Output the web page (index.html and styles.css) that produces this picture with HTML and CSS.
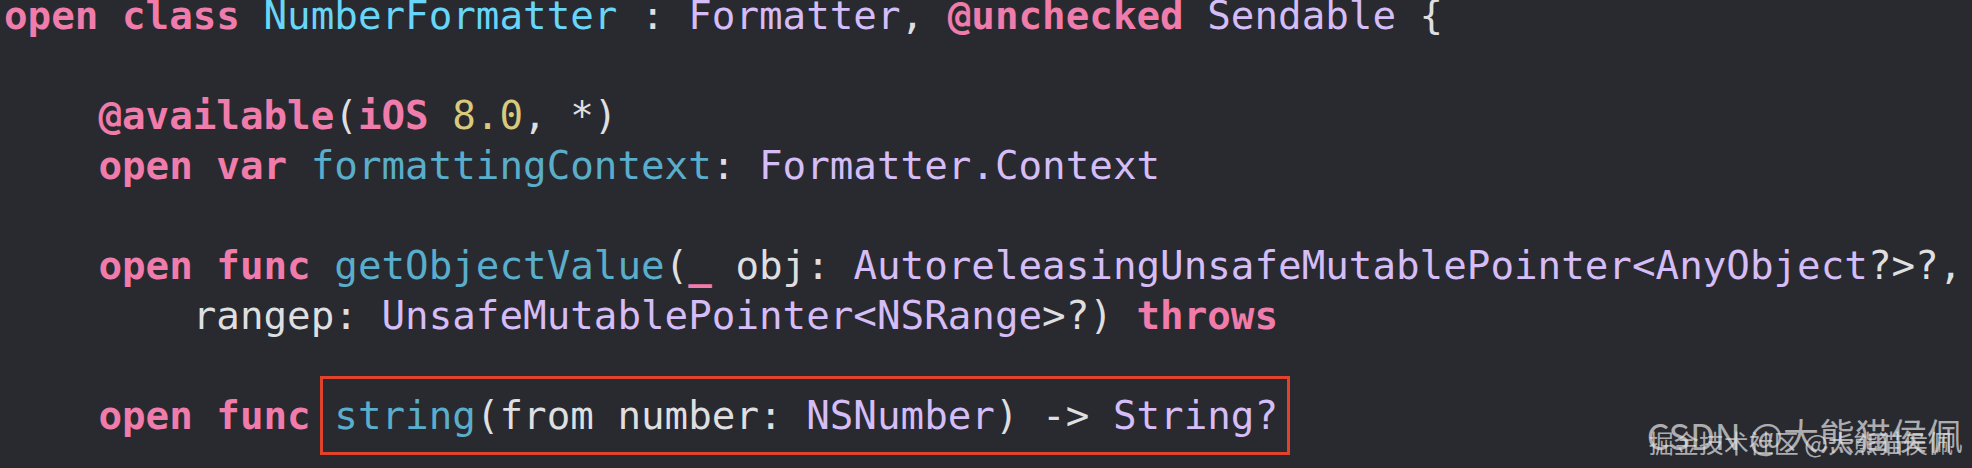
FILE: index.html
```html
<!DOCTYPE html>
<html>
<head>
<meta charset="utf-8">
<link rel="stylesheet" href="styles.css">
</head>
<body>
<div class="editor">
<pre class="code"><span class="kw">open</span> <span class="kw">class</span> <span class="decl">NumberFormatter</span> : <span class="ty">Formatter</span>, <span class="kw">@unchecked</span> <span class="ty">Sendable</span> {

    <span class="kw">@available</span>(<span class="kw">iOS</span> <span class="num">8.0</span>, *)
    <span class="kw">open</span> <span class="kw">var</span> <span class="fn">formattingContext</span>: <span class="ty">Formatter.Context</span>

    <span class="kw">open</span> <span class="kw">func</span> <span class="fn">getObjectValue</span>(<span class="kw">_</span> obj: <span class="ty">AutoreleasingUnsafeMutablePointer&lt;AnyObject</span>?&gt;?,
        rangep: <span class="ty">UnsafeMutablePointer&lt;NSRange</span>&gt;?) <span class="kw">throws</span>

    <span class="kw">open</span> <span class="kw">func</span> <span class="hl"><span class="fn">string</span>(from number: <span class="ty">NSNumber</span>) -&gt; <span class="ty">String?</span></span></pre>
<div class="wm wm-csdn">CSDN @大熊猫侯佩</div>
<div class="wm wm-juejin">掘金技术社区 @大熊猫侯佩</div>
</div>
</body>
</html>
```
FILE: styles.css
```css
html, body {
  margin: 0;
  padding: 0;
  background: #292a30;
  width: 1972px;
  height: 468px;
  overflow: hidden;
}

.editor {
  position: relative;
  width: 1972px;
  height: 468px;
  background: #292a30;
  overflow: hidden;
}

.code {
  margin: -9px 0 0 0;
  padding: 0 0 0 4px;
  font-family: "DejaVu Sans Mono", "Liberation Mono", monospace;
  font-size: 39.2px;
  line-height: 50px;
  color: #dfdfe0;
  white-space: pre;
}

.kw {
  color: #f07cab;
  font-weight: bold;
}

.decl {
  color: #68d6f8;
}

.fn {
  color: #5aaecb;
}

.ty {
  color: #d5bdf7;
}

.num {
  color: #d9c97c;
}

.hl {
  border: 3px solid #e0422b;
  padding: 14px 9px 14px 11px;
  margin-left: -14px;
}

.wm {
  position: absolute;
  white-space: nowrap;
  font-family: "Noto Sans CJK SC", "Noto Sans", sans-serif;
  color: rgba(225, 225, 225, 0.72);
  line-height: 1;
}

.wm-csdn {
  right: 9px;
  top: 416px;
  font-size: 36px;
}

.wm-juejin {
  right: 19px;
  top: 430px;
  font-size: 25px;
}
```
